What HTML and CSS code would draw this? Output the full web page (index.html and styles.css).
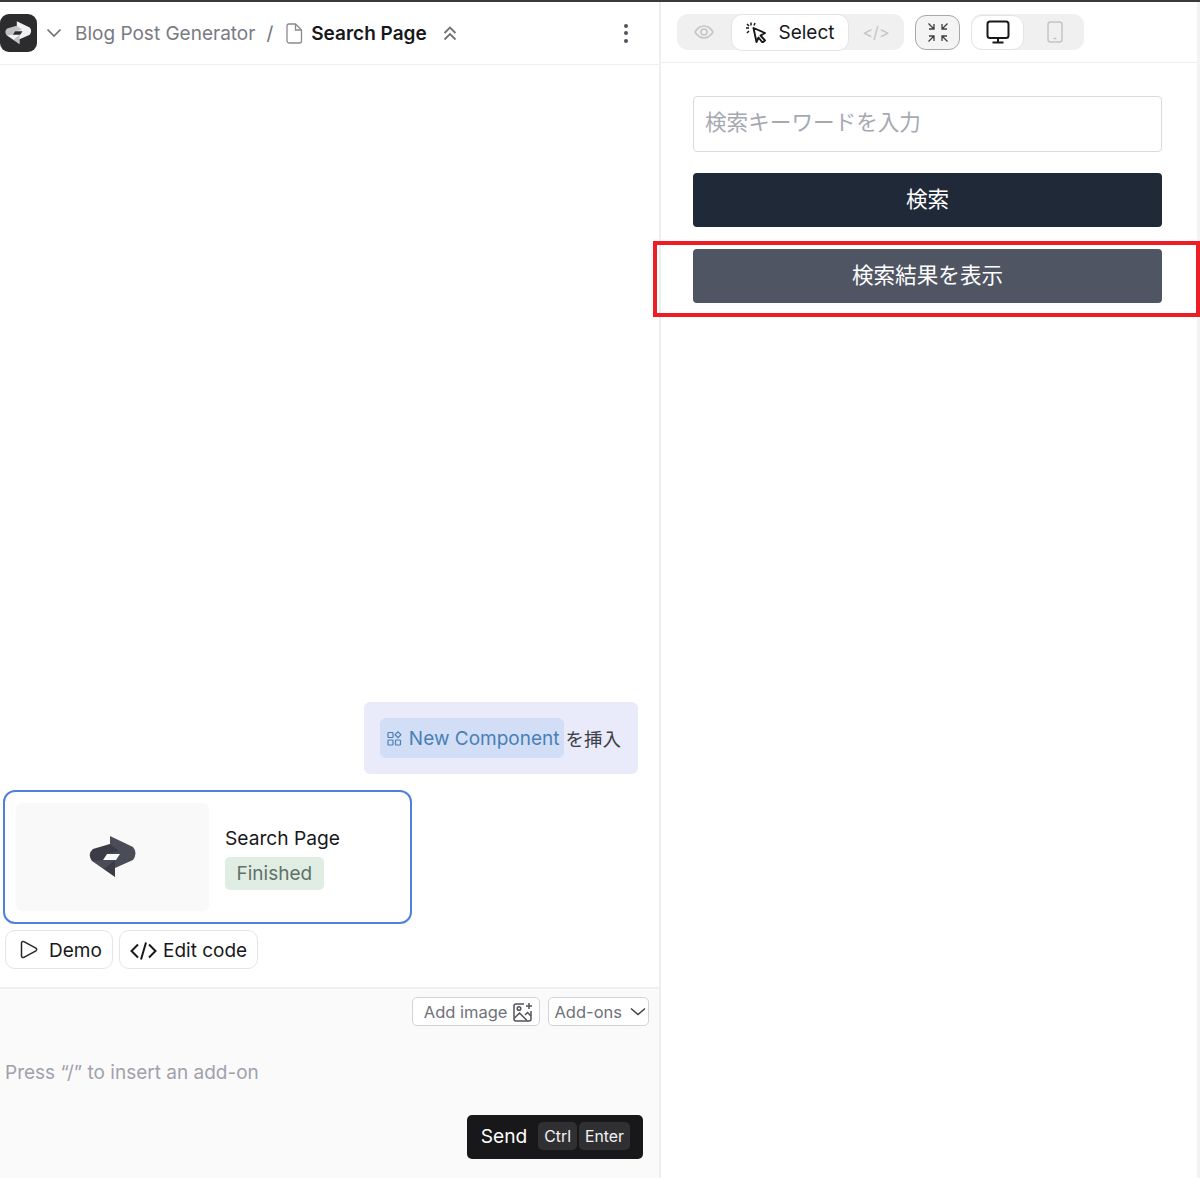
FILE: index.html
```html
<!DOCTYPE html>
<html lang="ja">
<head>
<meta charset="utf-8">
<title>Search Page</title>
<link rel="stylesheet" href="styles.css">
</head>
<body>
<svg class="defs" width="0" height="0" aria-hidden="true">
  <defs>
    <symbol id="logo" viewBox="0 0 48 42">
      <path fill-rule="evenodd" d="M21 0 L44 11 Q49 17 44 24 L26 32 L26 41 L3 25 Q-2 18 4 13 L21 8 Z M18 18 L14 24 L27 24 L31 18 Z"/>
      <path class="facet" d="M21 8 L4 13 Q-2 18 3 25 L14 24 L18 18 L30 15 Z"/>
      <path class="facet" d="M26 41 L15 33 L26 24 Z"/>
    </symbol>
  </defs>
</svg>
<div class="app">
  <section class="left">
    <header class="crumbs">
      <span class="logo"><svg width="27" height="24"><use href="#logo"/></svg></span>
      <svg class="chev" width="16" height="10" viewBox="0 0 16 10"><path d="M1.500 1.500 8 8l6.500-6.500"/></svg>
      <span class="project">Blog Post Generator</span>
      <span class="slash">/</span>
      <svg class="file" width="18" height="21" viewBox="0 0 18 21"><path d="M4 1h6.500L16.500 7v11a2 2 0 0 1-2 2H4a2 2 0 0 1-2-2V3a2 2 0 0 1 2-2z"/><path d="M10.500 1v6h6"/></svg>
      <strong class="page">Search Page</strong>
      <svg class="updown" width="14" height="15" viewBox="0 0 14 15"><path d="M1.500 7 7 1.500 12.500 7M1.500 13.500 7 8l5.500 5.500"/></svg>
      <span class="dots"><i></i><i></i><i></i></span>
    </header>

    <div class="messages">
      <div class="bubble">
        <span class="chip">
          <svg width="15" height="15" viewBox="0 0 15 15"><rect x="1" y="1.500" width="5" height="5" rx=".8"/><rect x="1" y="9" width="5" height="5" rx=".8"/><rect x="8.500" y="9" width="5" height="5" rx=".8"/><path d="m11 .8 2.900 2.900L11 6.600 8.100 3.700z"/></svg>
          New Component
        </span><span class="insert">を挿入</span>
      </div>
      <article class="card">
        <div class="thumb"><svg class="thumb-logo" width="48" height="42"><use href="#logo"/></svg></div>
        <div class="card-info">
          <div class="card-title">Search Page</div>
          <span class="status">Finished</span>
        </div>
      </article>
      <div class="actions">
        <button class="action demo">
          <svg width="18" height="19" viewBox="0 0 18 19"><path d="M1.500 3c0-1.300 1.300-2 2.400-1.300l12 6.500c1 .6 1 2 0 2.600l-12 6.500c-1.100.7-2.400 0-2.400-1.300z"/></svg>
          Demo
        </button>
        <button class="action code">
          <svg width="27" height="20" viewBox="0 0 27 20"><path d="M8 3.500 1.500 10 8 16.500M19 3.500l6.500 6.500-6.500 6.500M16 1.500 11 18.500"/></svg>
          Edit code
        </button>
      </div>
    </div>

    <footer class="composer">
      <div class="tools">
        <button class="tool add-image">Add image
          <svg width="20" height="20" viewBox="0 0 20 20"><path d="M11 2H3a2 2 0 0 0-2 2v13a2 2 0 0 0 2 2h13a2 2 0 0 0 2-2V9"/><path d="m1.500 16 5-5 7.500 7.500M12 13l2.500-2.500L18 14"/><circle cx="6" cy="6.500" r="1.800"/><path d="M16 1v6M13 4h6"/></svg>
        </button>
        <button class="tool add-ons">Add-ons
          <svg width="16" height="9" viewBox="0 0 16 9"><path d="M1 1.500 8 7.500l7-6"/></svg>
        </button>
      </div>
      <div class="prompt">Press “/” to insert an add-on</div>
      <div class="send-row">
        <button class="send">Send <kbd>Ctrl</kbd><kbd>Enter</kbd></button>
      </div>
    </footer>
  </section>

  <section class="right">
    <div class="toolbar">
      <div class="seg seg-mode">
        <span class="seg-off eye"><svg width="20" height="14" viewBox="0 0 20 14"><path d="M1 7c2.500-4 5.500-6 9-6s6.500 2 9 6c-2.500 4-5.500 6-9 6s-6.500-2-9-6z"/><circle cx="10" cy="7" r="3"/></svg></span>
        <span class="seg-on select">
          <svg width="22" height="22" viewBox="0 0 22 22"><path class="cursor" d="M8.500 7 20 12l-4.500 2.500 4.500 5-2.500 2-4-5-2 4.500z"/><path d="M6 1.500v3M1 7h3M2 3l2 2M10 2l-1 2.500M2 12l2-2"/></svg>
          Select
        </span>
        <span class="seg-off tag">&lt;/&gt;</span>
      </div>
      <span class="collapse"><svg width="20" height="19" viewBox="0 0 20 19"><path d="M.5.500 6 6M1 6h5V1M19.500.500 14 6M14 1v5h5M.5 18.500 6 13M1 13h5v5M19.500 18.500 14 13M14 18v-5h5"/></svg></span>
      <div class="seg seg-device">
        <span class="seg-on device"><svg width="24" height="24" viewBox="0 0 24 24"><rect x="1.500" y="1.500" width="21" height="16.500" rx="2.500"/><path d="M12 18v4M6.500 22.500h11"/></svg></span>
        <span class="seg-off phone"><svg width="16" height="22" viewBox="0 0 16 22"><rect x="1" y="1" width="14" height="20" rx="2.500"/><path d="M6.500 17.500h3"/></svg></span>
      </div>
    </div>
    <div class="preview">
      <div class="search-input">検索キーワードを入力</div>
      <button class="btn btn-dark">検索</button>
      <button class="btn btn-gray">検索結果を表示</button>
    </div>
  </section>
  <div class="highlight"></div>
</div>
</body>
</html>
```
FILE: styles.css
```css
* { box-sizing: border-box; }
html, body { margin: 0; height: 100%; }
body {
  background: #fff;
  color: #18181b;
  font-family: Inter, "Noto Sans CJK JP", sans-serif;
  font-size: 19px;
  overflow: hidden;
}
button { font: inherit; color: inherit; cursor: pointer; }
.defs { position: absolute; }
.facet { fill: #000; opacity: .2; }
.app {
  position: relative;
  display: flex;
  height: 1178px;
  border-top: 2px solid #3a3a3a;
}
.left {
  display: flex;
  flex-direction: column;
  width: 661px;
  border-right: 2px solid #eeeeee;
}
.crumbs {
  display: flex;
  align-items: center;
  height: 63px;
  flex: none;
  border-bottom: 1px solid #eeeeee;
  padding-right: 31px;
}
.logo {
  display: flex;
  align-items: center;
  justify-content: center;
  width: 37px;
  height: 38px;
  border-radius: 9px;
  background: #2c2c2e;
  fill: #f2f2f2;
}
.chev { margin-left: 9px; fill: none; stroke: #71717a; stroke-width: 1.700; }
.project { margin-left: 13px; color: #7a7a82; }
.slash { margin-left: 11px; color: #71717a; }
.file { margin-left: 12px; fill: none; stroke: #8a8a90; stroke-width: 1.300; }
.page { margin-left: 8px; font-weight: 600; }
.updown { margin-left: 16px; fill: none; stroke: #71717a; stroke-width: 1.800; }
.dots { display: flex; flex-direction: column; gap: 3.500px; margin-left: auto; }
.dots i { width: 4px; height: 4px; border-radius: 50%; background: #52525b; }

.messages {
  flex: 1;
  display: flex;
  flex-direction: column;
  justify-content: flex-end;
  align-items: flex-start;
  padding: 0 21px 18px 3px;
}
.bubble {
  align-self: flex-end;
  display: flex;
  align-items: center;
  height: 72px;
  padding: 0 17px 0 16px;
  border-radius: 6px;
  background: #e9ebfb;
  margin-bottom: 16px;
}
.chip {
  display: flex;
  align-items: center;
  gap: 7px;
  height: 40px;
  padding: 0 5px 0 7px;
  border-radius: 6px;
  background: #d2def5;
  color: #4a7fb5;
}
.chip svg { fill: none; stroke: #4a7fb5; stroke-width: 1.200; }
.insert { margin-left: 1px; color: #3f3f46; font-size: 18.500px; }
.card {
  display: flex;
  align-items: center;
  width: 409px;
  height: 134px;
  padding: 11px;
  border: 2px solid #4f7fe0;
  border-radius: 12px;
  background: #fff;
}
.thumb {
  display: flex;
  align-items: center;
  justify-content: center;
  width: 193px;
  height: 108px;
  flex: none;
  border-radius: 6px;
  background: #f9f9f9;
}
.thumb-logo { fill: #4a4c58; }
.card-info { margin-left: 16px; }
.card-title { font-size: 19.200px; line-height: 26px; }
.status {
  display: inline-block;
  margin-top: 6px;
  height: 33px;
  padding: 0 11.500px;
  border-radius: 5px;
  background: #e0ede2;
  color: #62706a;
  line-height: 33px;
}
.actions { display: flex; gap: 6px; margin: 6px 0 0 2px; }
.action {
  display: flex;
  align-items: center;
  height: 39px;
  padding: 2px 10px 0;
  border: 1px solid #e4e4e7;
  border-radius: 10px;
  background: #fff;
}
.action svg { flex: none; }
.demo { gap: 11px; padding-left: 14px; width: 108px; }
.demo svg { fill: none; stroke: #27272a; stroke-width: 1.500; margin-top: -3px; }
.code { gap: 6px; }
.code svg { fill: none; stroke: #18181b; stroke-width: 2; }

.composer {
  flex: none;
  height: 191px;
  display: flex;
  flex-direction: column;
  background: #fafafa;
  border-top: 2px solid #f0f0f0;
  padding: 8px 10px 0 5px;
}
.tools { display: flex; justify-content: flex-end; gap: 8px; height: 30px; }
.tool {
  display: flex;
  align-items: center;
  height: 29px;
  border: 1px solid #d4d4d8;
  border-radius: 5px;
  background: #fff;
  color: #71717a;
  font-size: 16.500px;
}
.tool svg { flex: none; }
.add-image { gap: 6px; padding: 0 6px 0 11px; }
.add-image svg { fill: none; stroke: #52525b; stroke-width: 1.500; }
.add-ons { gap: 8px; padding: 0 2px 0 5px; }
.add-ons svg { fill: none; stroke: #3f3f46; stroke-width: 1.500; }
.prompt { margin-top: 33px; color: #a1a1aa; line-height: 26px; }
.send-row { display: flex; justify-content: flex-end; margin-top: 29px; padding-right: 6px; }
.send {
  display: flex;
  align-items: center;
  height: 44px;
  padding: 0 13px 2px 14px;
  border: 0;
  border-radius: 5px;
  background: #18181a;
  color: #fff;
  font-size: 19.200px;
}
.send kbd {
  display: flex;
  align-items: center;
  height: 28px;
  padding: 0 6px;
  border-radius: 5px;
  background: #303032;
  color: #f4f4f5;
  font-family: inherit;
  font-size: 15.800px;
  margin-left: 2px;
}
.send kbd:first-of-type { margin-left: 11px; }

.right { flex: 1; display: flex; flex-direction: column; border-right: 3px solid #f3f3f3; min-width: 0; }
.toolbar {
  display: flex;
  align-items: center;
  height: 61px;
  flex: none;
  padding-left: 16px;
  border-bottom: 1px solid #eeeeee;
}
.seg { display: flex; align-items: center; height: 36px; border-radius: 11px; background: #f0f0f1; }
.seg-on {
  display: flex;
  align-items: center;
  justify-content: center;
  background: #fff;
  border: 1px solid #e4e4e7;
  border-radius: 11px;
}
.seg-off { display: flex; align-items: center; justify-content: center; color: #c4c4c8; }
.seg-off svg { fill: none; stroke: #c4c4c8; stroke-width: 1.500; }
.seg-mode { width: 227px; }
.eye { width: 54px; }
.select { width: 118px; height: 37px; gap: 11px; }
.select svg { fill: none; stroke: #18181b; stroke-width: 1.500; }
.select .cursor { stroke-width: 1.900; stroke-linejoin: round; }
.tag { width: 54px; font-size: 16px; }
.collapse {
  display: flex;
  align-items: center;
  justify-content: center;
  width: 45px;
  height: 35px;
  margin-left: 11px;
  border: 1px solid #a8a8ac;
  border-radius: 11px;
  background: #f4f4f5;
}
.collapse svg { fill: none; stroke: #3f3f46; stroke-width: 1.300; }
.seg-device { width: 113px; margin-left: 11px; }
.device { width: 53px; height: 35px; padding-left: 1px; }
.device svg { fill: none; stroke: #18181b; stroke-width: 2; }
.phone { flex: 1; padding-left: 1px; }
.preview { padding: 33px 35px 0 32px; display: flex; flex-direction: column; }
.search-input {
  height: 56px;
  padding: 0 11px;
  border: 1px solid #d8dbe2;
  border-radius: 4px;
  color: #a5a9b2;
  font-size: 21.600px;
  line-height: 51px;
}
.btn {
  height: 54px;
  margin-top: 22px;
  padding: 0 0 6px;
  border: 0;
  border-radius: 4px;
  color: #fff;
  font-size: 21.600px;
}
.btn-dark { background: #1f2937; margin-top: 21px; }
.btn-gray { background: #4f5563; }
.highlight {
  position: absolute;
  left: 653px;
  top: 239px;
  width: 547px;
  height: 76px;
  border: 4px solid #ee1c25;
}
```
